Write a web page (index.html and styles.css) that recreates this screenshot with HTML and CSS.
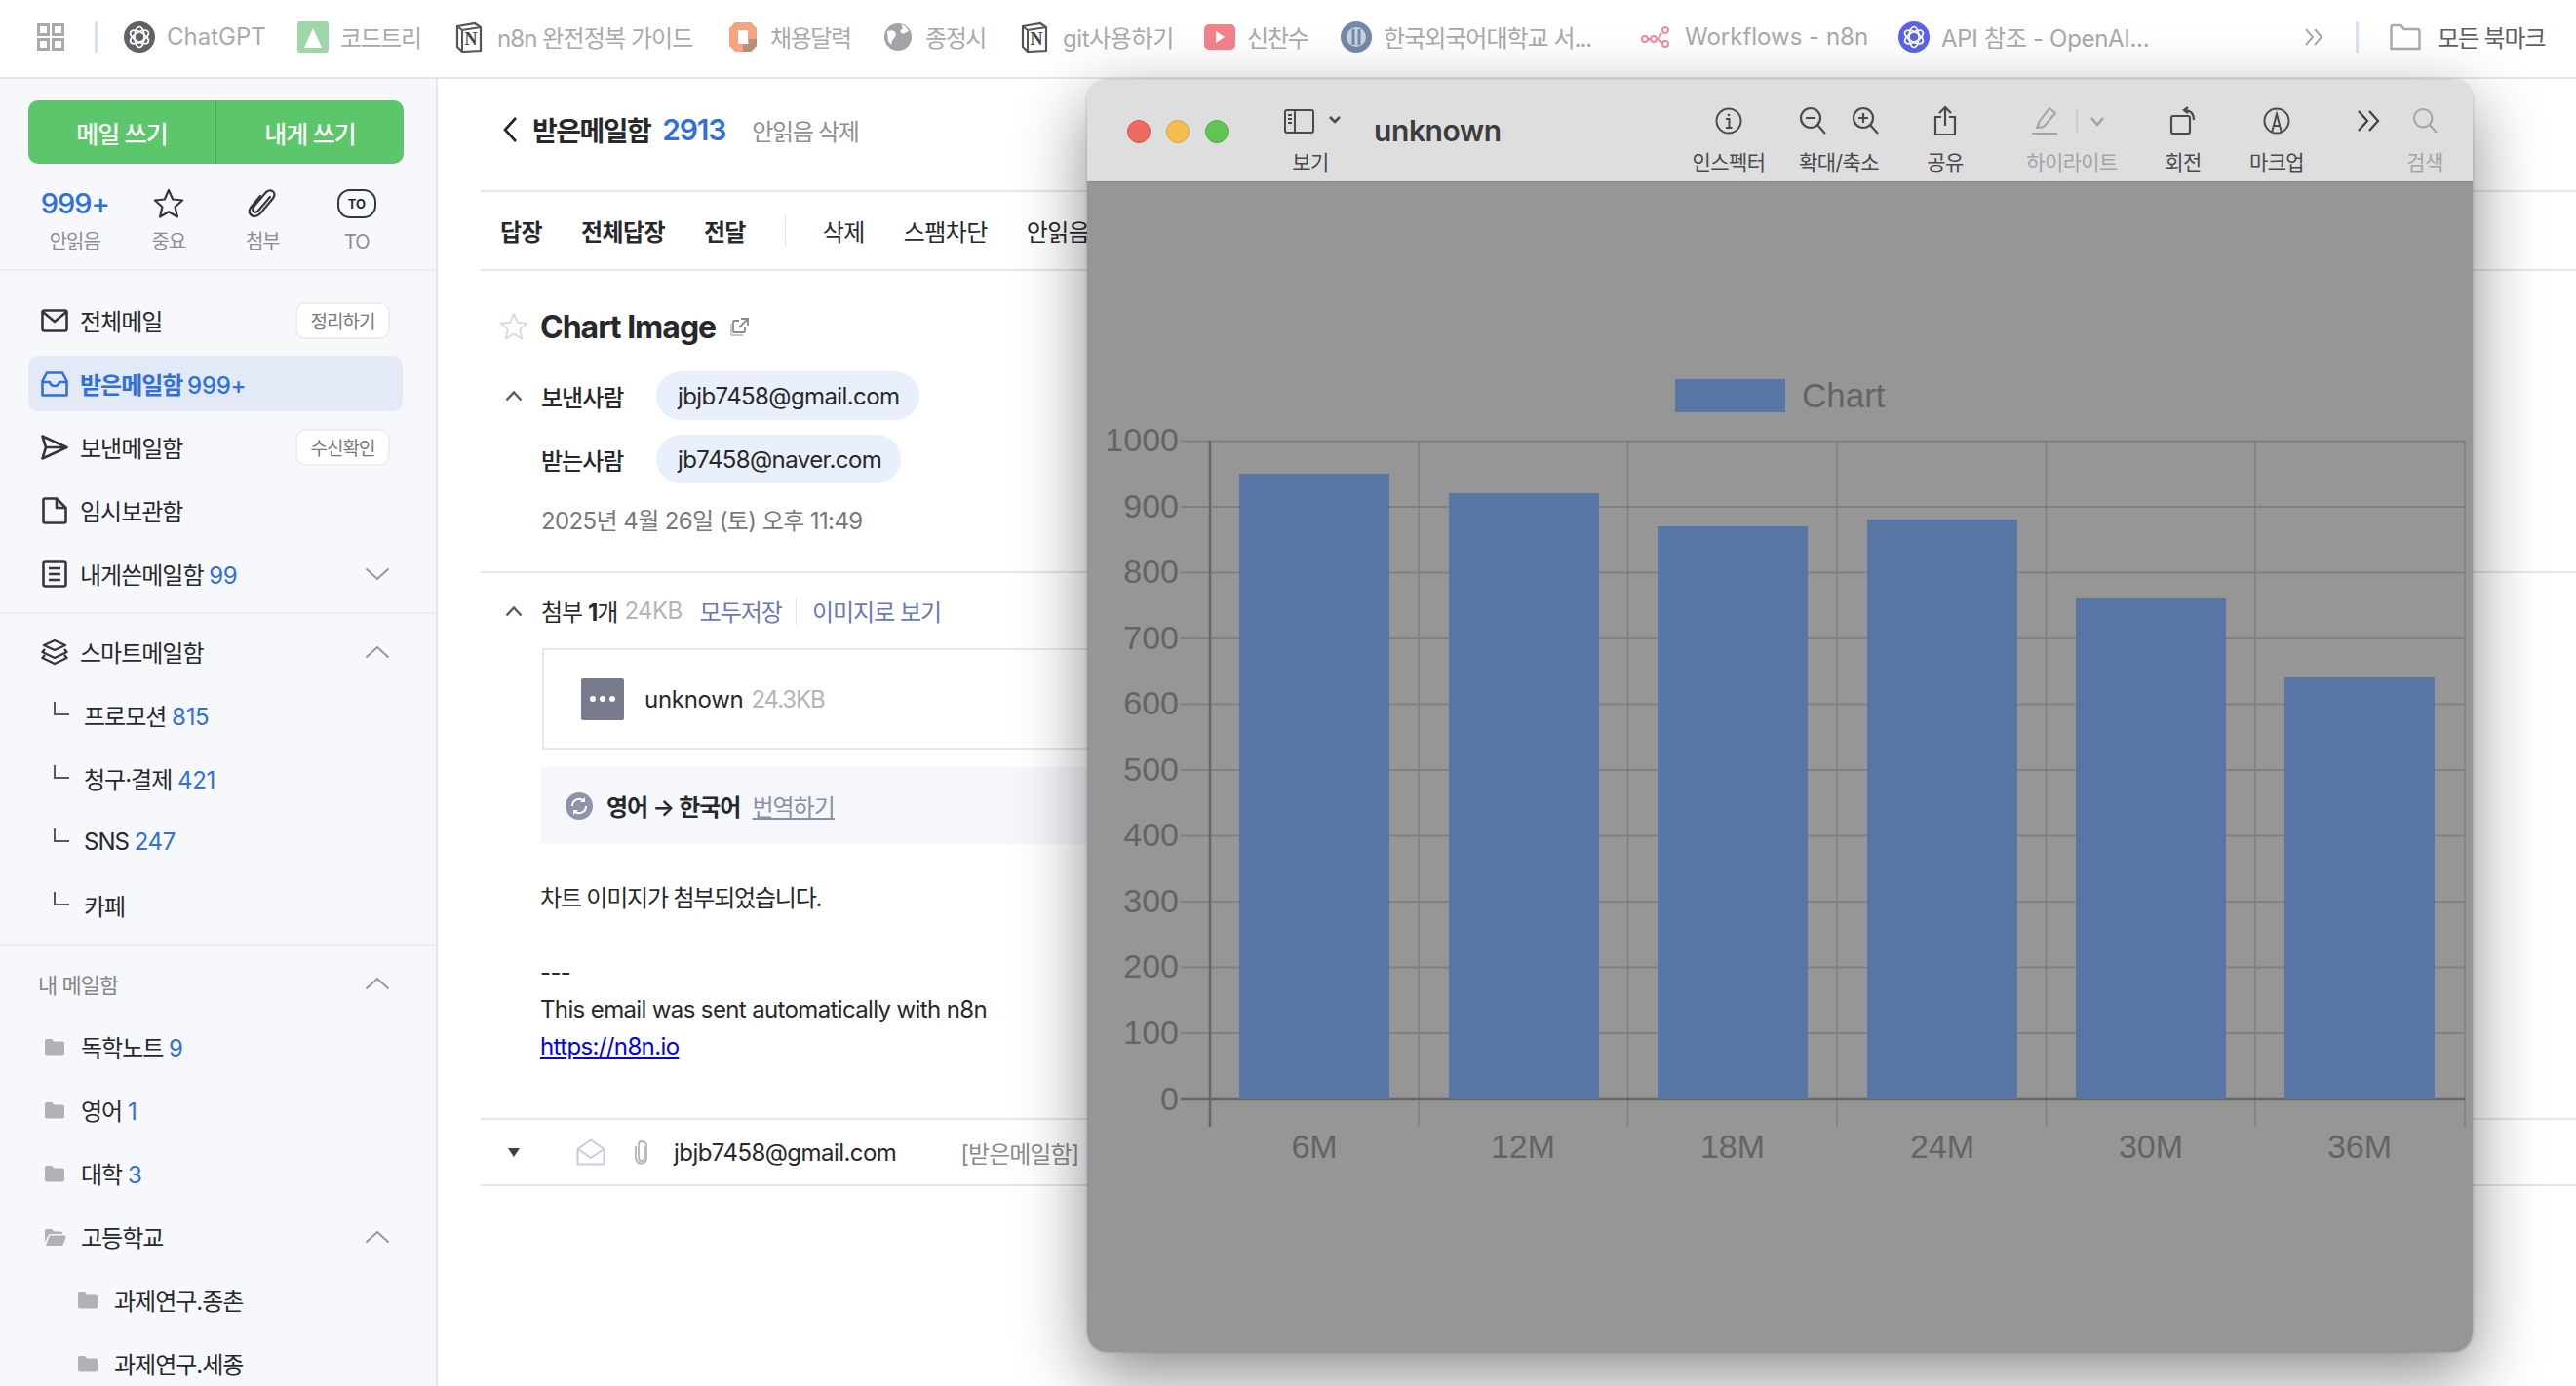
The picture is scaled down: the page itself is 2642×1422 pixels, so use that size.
FILE: index.html
```html
<!DOCTYPE html>
<html lang="ko">

<head>
    <title>받은메일함 - Chart Image</title>
    <meta charset="utf-8">
    <link rel="stylesheet" href="styles.css">
</head>

<body>
    <svg class="defs" width="0" height="0">
        <symbol id="folder" viewBox="0 0 20 18"><path d="M0 3q0-2 2-2h5l2 2.500h9q2 0 2 2v10q0 2-2 2H2q-2 0-2-2z" fill="#b1b1b6"/></symbol>
        <symbol id="chev-up" viewBox="0 0 26 14"><path d="M1.500 12.500 13 2l11.500 10.500" fill="none" stroke="#96969a" stroke-width="2"/></symbol>
        <symbol id="chev-down" viewBox="0 0 26 14"><path d="M1.500 1.500 13 12 24.500 1.500" fill="none" stroke="#96969a" stroke-width="2"/></symbol>
        <symbol id="small-up" viewBox="0 0 18 12"><path d="M1.500 10.500 9 2.500l7.500 8" fill="none" stroke="#55585e" stroke-width="2.400"/></symbol>
        <symbol id="elbow" viewBox="0 0 18 16"><path d="M2 1v13h15" fill="none" stroke="#55585e" stroke-width="2"/></symbol>
        <symbol id="knot" viewBox="0 0 32 32"><g fill="none" stroke="#fff" stroke-width="1.700"><ellipse cx="16" cy="16" rx="5" ry="10.500"/><ellipse cx="16" cy="16" rx="5" ry="10.500" transform="rotate(60 16 16)"/><ellipse cx="16" cy="16" rx="5" ry="10.500" transform="rotate(120 16 16)"/></g></symbol>
        <symbol id="notion" viewBox="0 0 28 32"><path d="M2 5 20 2l6 4v24L7 31l-5-5z" fill="#fff" stroke="#555" stroke-width="2.200"/><path d="M2 5l5 4 19-3M7 9v22" fill="none" stroke="#555" stroke-width="2"/></symbol>
    </svg>

    <header class="bookmarks">
        <svg class="bm-grid" width="28" height="28" viewBox="0 0 28 28" fill="none" stroke="#a9a9ad" stroke-width="3"><rect x="1.500" y="1.500" width="10" height="10"/><rect x="16.500" y="1.500" width="10" height="10"/><rect x="1.500" y="16.500" width="10" height="10"/><rect x="16.500" y="16.500" width="10" height="10"/></svg>
        <span class="bm-sep bm-sep-first"></span>
        <a class="bm bm-gpt"><svg width="32" height="32" viewBox="0 0 32 32"><circle cx="16" cy="16" r="16" fill="#626266"/><use href="#knot" width="32" height="32"/></svg>ChatGPT</a>
        <a class="bm bm-code"><svg width="32" height="32" viewBox="0 0 32 32"><rect width="32" height="32" rx="3" fill="#9fd6a8"/><path d="M16 7 25 27H7z" fill="#fff"/></svg>코드트리</a>
        <a class="bm bm-guide"><span class="notion"><svg width="28" height="32"><use href="#notion"/></svg><i>N</i></span>n8n 완전정복 가이드</a>
        <a class="bm bm-cal"><svg width="28" height="32" viewBox="0 0 28 32"><path d="M6 1h16l6 6v18l-6 6H6l-6-6V7z" fill="#f2a57f"/><path d="M28 18v7l-6 6H14V23h6v-5z" fill="#b98f78"/><rect x="9" y="9" width="10" height="14" fill="#fff"/></svg>채용달력</a>
        <a class="bm bm-jong"><svg width="28" height="32" viewBox="0 0 28 32"><circle cx="14" cy="16" r="14" fill="#a2a4a8"/><path d="M3 10q6-2 8 1t-1 6-3 7l-3-4zM17 3q6 2 8 7l-6 3-3-3 3-3z" fill="#fff"/></svg>종정시</a>
        <a class="bm bm-git"><span class="notion"><svg width="28" height="32"><use href="#notion"/></svg><i>N</i></span>git사용하기</a>
        <a class="bm bm-shin"><svg width="32" height="32" viewBox="0 0 32 32"><rect y="3" width="32" height="26" rx="5" fill="#f4828b"/><path d="M12 10l9 6-9 6z" fill="#fff"/></svg>신찬수</a>
        <a class="bm bm-hufs"><svg width="32" height="32" viewBox="0 0 32 32"><circle cx="16" cy="16" r="16" fill="#7389a8"/><circle cx="16" cy="16" r="10" fill="#c9d2de"/><path d="M13 8v16M19 8v16" stroke="#7389a8" stroke-width="3"/></svg><span>한국외국어대학교 서...</span></a>
        <a class="bm bm-flow"><svg width="30" height="22" viewBox="0 0 30 22" fill="none" stroke="#ee8d9f" stroke-width="2"><circle cx="4" cy="13" r="3"/><circle cx="13" cy="13" r="3"/><circle cx="25" cy="4" r="3"/><circle cx="25" cy="18" r="3"/><path d="M7 13h3M16 13q3 0 5-6M16 13q3 0 6 4"/></svg>Workflows - n8n</a>
        <a class="bm bm-api"><svg width="32" height="32" viewBox="0 0 32 32"><circle cx="16" cy="16" r="16" fill="#5a62ea"/><use href="#knot" width="32" height="32"/></svg>API 참조 - OpenAI...</a>
        <svg class="bm-more" width="20" height="20" viewBox="0 0 20 20" fill="none" stroke="#a9a9ad" stroke-width="2"><path d="M2 2l7 8-7 8M11 2l7 8-7 8"/></svg>
        <span class="bm-sep"></span>
        <a class="bm bm-all"><svg width="32" height="28" viewBox="0 0 32 28" fill="none" stroke="#aaaaae" stroke-width="2.400"><path d="M1.500 26V4q0-2 2-2h8l3 4h14q2 0 2 2v18z"/></svg>모든 북마크</a>
    </header>

    <div class="app">
        <aside class="sidebar">
            <section class="side-top">
                <div class="compose"><span>메일 쓰기</span><span>내게 쓰기</span></div>
                <div class="stats">
                    <div class="stat stat-num"><b>999+</b><small>안읽음</small></div>
                    <div class="stat"><svg width="32" height="32" viewBox="0 0 32 32" fill="none" stroke="#33363c" stroke-width="2.200" stroke-linejoin="round"><path d="M16 2l4.200 9.500 10 1-7.600 6.800 2.300 10.200L16 24.200 7.100 29.500l2.300-10.200L1.800 12.500l10-1z"/></svg><small>중요</small></div>
                    <div class="stat"><svg width="32" height="32" viewBox="0 0 32 32" fill="none" stroke="#33363c" stroke-width="2.200" stroke-linecap="round"><path d="M24 9 12 23q-3 3-5 1t1-6L20 4q4-3 7-.5t0 7L14 26q-5 5-9 2t-1-8L14 8"/></svg><small>첨부</small></div>
                    <div class="stat"><span class="to-icon">TO</span><small>TO</small></div>
                </div>
            </section>

            <section class="side-sec side-main">
                <div class="row"><svg class="ic" width="28" height="24" viewBox="0 0 28 24" fill="none" stroke="#33363c" stroke-width="2.600" stroke-linejoin="round"><rect x="1.500" y="1.500" width="25" height="21" rx="2"/><path d="M2 3l12 10L26 3"/></svg><span class="lbl">전체메일</span><span class="tag">정리하기</span></div>
                <div class="row row-on"><svg class="ic" width="28" height="26" viewBox="0 0 28 26" fill="none" stroke="#2f6fe0" stroke-width="2.600" stroke-linejoin="round"><path d="M1.500 10 6 1.500h16L26.500 10v14.500h-25z"/><path d="M2 11h7q1 4 5 4t5-4h7"/></svg><span class="lbl">받은메일함 <em>999+</em></span></div>
                <div class="row"><svg class="ic" width="28" height="26" viewBox="0 0 28 26" fill="none" stroke="#33363c" stroke-width="2.600" stroke-linejoin="round"><path d="M1.500 1.500 26.500 13 1.500 24.500 5 13zM5 13h21"/></svg><span class="lbl">보낸메일함</span><span class="tag">수신확인</span></div>
                <div class="row"><svg class="ic" width="28" height="28" viewBox="0 0 28 28" fill="none" stroke="#33363c" stroke-width="2.600" stroke-linejoin="round"><path d="M2.500 3q0-1.500 1.500-1.500h12l9.500 9.500v14q0 1.500-1.500 1.500H4q-1.500 0-1.500-1.500z"/><path d="M16 2v9h9"/></svg><span class="lbl">임시보관함</span></div>
                <div class="row"><svg class="ic" width="28" height="28" viewBox="0 0 28 28" fill="none" stroke="#33363c" stroke-width="2.600" stroke-linejoin="round"><rect x="2.500" y="1.500" width="23" height="25" rx="2"/><path d="M8 8h12M8 14h12M8 20h12"/></svg><span class="lbl">내게쓴메일함 <em>99</em></span><svg class="chev" width="26" height="14"><use href="#chev-down"/></svg></div>
            </section>

            <section class="side-sec side-smart">
                <div class="row"><svg class="ic" width="28" height="28" viewBox="0 0 28 28" fill="none" stroke="#33363c" stroke-width="2.400" stroke-linejoin="round"><path d="M14 2l11 5-11 5L3 7zM4 11 1.500 14 14 20l12.500-6L24 11M4 17l-2.500 3L14 26l12.500-6L24 17"/></svg><span class="lbl">스마트메일함</span><svg class="chev" width="26" height="14"><use href="#chev-up"/></svg></div>
                <div class="row row-sub"><svg class="elbow" width="18" height="16"><use href="#elbow"/></svg><span class="lbl">프로모션 <em>815</em></span></div>
                <div class="row row-sub"><svg class="elbow" width="18" height="16"><use href="#elbow"/></svg><span class="lbl">청구·결제 <em>421</em></span></div>
                <div class="row row-sub"><svg class="elbow" width="18" height="16"><use href="#elbow"/></svg><span class="lbl">SNS <em>247</em></span></div>
                <div class="row row-sub"><svg class="elbow" width="18" height="16"><use href="#elbow"/></svg><span class="lbl">카페</span></div>
            </section>

            <section class="side-sec side-mine">
                <div class="row row-head"><span class="lbl">내 메일함</span><svg class="chev" width="26" height="14"><use href="#chev-up"/></svg></div>
                <div class="row row-f"><svg class="fold" width="20" height="18"><use href="#folder"/></svg><span class="lbl">독학노트 <em>9</em></span></div>
                <div class="row row-f"><svg class="fold" width="20" height="18"><use href="#folder"/></svg><span class="lbl">영어 <em>1</em></span></div>
                <div class="row row-f"><svg class="fold" width="20" height="18"><use href="#folder"/></svg><span class="lbl">대학 <em>3</em></span></div>
                <div class="row row-f"><svg class="fold fold-open" width="22" height="18" viewBox="0 0 22 18"><path d="M0 3q0-2 2-2h5l2 2.500h7q2 0 2 2V6H6q-2 0-3 2L0 15z" fill="#b1b1b6"/><path d="M5 7.500h15q2 0 1.500 2L19 16q-.5 2-2 2H1z" fill="#b1b1b6"/></svg><span class="lbl">고등학교</span><svg class="chev" width="26" height="14"><use href="#chev-up"/></svg></div>
                <div class="row row-f row-nest"><svg class="fold" width="20" height="18"><use href="#folder"/></svg><span class="lbl">과제연구.종촌</span></div>
                <div class="row row-f row-nest"><svg class="fold" width="20" height="18"><use href="#folder"/></svg><span class="lbl">과제연구.세종</span></div>
            </section>
        </aside>

        <main class="mail">
            <div class="mail-head">
                <svg class="back" width="16" height="28" viewBox="0 0 16 28" fill="none" stroke="#222" stroke-width="2.600"><path d="M14 2 3 14l11 12"/></svg>
                <h1>받은메일함</h1>
                <span class="head-count">2913</span>
                <span class="head-del">안읽음 삭제</span>
            </div>

            <div class="mail-tools">
                <b>답장</b><b>전체답장</b><b>전달</b>
                <i></i>
                <span>삭제</span><span>스팸차단</span><span>안읽음</span>
            </div>

            <div class="mail-meta">
                <div class="subject">
                    <svg width="30" height="30" viewBox="0 0 32 32" fill="none" stroke="#d6dbea" stroke-width="2" stroke-linejoin="round"><path d="M16 2l4.200 9.500 10 1-7.600 6.800 2.300 10.200L16 24.200 7.100 29.500l2.300-10.200L1.800 12.500l10-1z"/></svg>
                    <h2>Chart Image</h2>
                    <svg class="ext" width="20" height="20" viewBox="0 0 20 20" fill="none" stroke="#8a8a8e" stroke-width="1.800"><path d="M9 4H4q-1 0-1 1v10q0 1 1 1h10q1 0 1-1v-4M11 2h7v7M18 2 9 11"/><path d="M1 7v11q0 1 1 1h11" stroke="#c4c4c8"/></svg>
                </div>
                <div class="addr"><svg class="addr-ic" width="18" height="12"><use href="#small-up"/></svg><b>보낸사람</b><span class="pill">jbjb7458@gmail.com</span></div>
                <div class="addr addr-to"><b>받는사람</b><span class="pill">jb7458@naver.com</span></div>
                <p class="date">2025년 4월 26일 (토) 오후 11:49</p>
            </div>

            <div class="attach">
                <div class="attach-head">
                    <svg class="addr-ic" width="18" height="12"><use href="#small-up"/></svg>
                    <span class="att-count">첨부 <b>1</b>개</span><span class="att-size">24KB</span>
                    <a class="att-link">모두저장</a><i></i><a class="att-link">이미지로 보기</a>
                </div>
                <div class="att-box">
                    <span class="att-file"><u></u><u></u><u></u></span>
                    <span class="att-name">unknown</span><span class="att-kb">24.3KB</span>
                </div>
                <div class="translate">
                    <svg width="28" height="28" viewBox="0 0 28 28"><circle cx="14" cy="14" r="14" fill="#9094a8"/><path d="M7 14a7 7 0 0 1 12-5M21 14a7 7 0 0 1-12 5" fill="none" stroke="#fff" stroke-width="2"/><path d="M20 5v5h-5zM8 23v-5h5z" fill="#fff"/></svg>
                    <b>영어 → 한국어</b><a>번역하기</a>
                </div>
                <div class="body-text">
                    <p>차트 이미지가 첨부되었습니다.</p>
                    <p class="sig">---<br>This email was sent automatically with n8n<br><a href="#">https://n8n.io</a></p>
                </div>
            </div>

            <div class="mail-row">
                <span class="tri"></span>
                <svg class="env" width="30" height="28" viewBox="0 0 30 28" fill="none" stroke="#c5cce2" stroke-width="2" stroke-linejoin="round"><path d="M1.500 11 15 1.500 28.500 11v15.500h-27z"/><path d="M2 11l13 9 13-9"/></svg>
                <svg class="clip" width="14" height="26" viewBox="0 0 14 26" fill="none" stroke="#b4b4b8" stroke-width="1.800"><path d="M10 7v12q0 3-3 3t-3-3V5q0-3 3-3t5 3v14q0 5-5 5.500T1 19V7"/></svg>
                <span class="row-from">jbjb7458@gmail.com</span>
                <span class="row-box">[받은메일함]</span>
            </div>
        </main>
    </div>

    <!-- 미리보기 창 -->
    <div class="win">
        <div class="win-bar">
            <div class="lights"><i class="l-red"></i><i class="l-yel"></i><i class="l-grn"></i></div>
            <div class="tool tool-view">
                <svg width="62" height="36" viewBox="0 0 62 36" fill="none" stroke="#4a4a4c" stroke-width="2"><rect x="5" y="7" width="29" height="23" rx="2"/><path d="M15 7v23M8 12h4M8 16h4M8 20h4"/><path d="M51 14l5 5 5-5" stroke-width="2.600"/></svg>
                <span>보기</span>
            </div>
            <div class="win-title">unknown</div>
            <div class="tool tool-info">
                <svg width="28" height="28" viewBox="0 0 28 28" fill="none" stroke="#4a4a4c" stroke-width="2"><circle cx="14" cy="14" r="12.500"/><circle cx="14" cy="8" r="1.300" fill="#4a4a4c" stroke="none"/><path d="M11 12h3.500v9M11 21h6.500"/></svg>
                <span>인스펙터</span>
            </div>
            <div class="tool tool-zoom">
                <svg width="82" height="30" viewBox="0 0 82 30" fill="none" stroke="#4a4a4c" stroke-width="2.200"><circle cx="12" cy="12" r="10"/><path d="M7 12h10M19 19l8 9"/><circle cx="66" cy="12" r="10"/><path d="M61 12h10M66 7v10M73 19l8 9"/></svg>
                <span>확대/축소</span>
            </div>
            <div class="tool tool-share">
                <svg width="24" height="32" viewBox="0 0 24 32" fill="none" stroke="#4a4a4c" stroke-width="2.200"><path d="M8 12H2v18h20V12h-6M12 21V2M6 8l6-6 6 6"/></svg>
                <span>공유</span>
            </div>
            <div class="tool tool-high tool-dim">
                <svg width="84" height="30" viewBox="0 0 84 30" fill="none" stroke="#a4a4a8" stroke-width="2"><path d="M6 22 9 15 19 2l6 5-12 14zM1 28h26"/><path d="M47 2v26" stroke="#cacacc"/><path d="M62 12l6 7 6-7" stroke-width="2.600"/></svg>
                <span>하이라이트</span>
            </div>
            <div class="tool tool-rot">
                <svg width="28" height="30" viewBox="0 0 28 30" fill="none" stroke="#4a4a4c" stroke-width="2.200"><rect x="2" y="10" width="19" height="18" rx="2"/><path d="M15 4q10 0 10 10M19 1l-4 3 4 3"/></svg>
                <span>회전</span>
            </div>
            <div class="tool tool-mark">
                <svg width="28" height="28" viewBox="0 0 28 28" fill="none" stroke="#4a4a4c" stroke-width="2"><circle cx="14" cy="14" r="12.500"/><path d="M9 26 14 7l5 19M11 19h6" stroke-width="2"/></svg>
                <span>마크업</span>
            </div>
            <div class="tool tool-more">
                <svg width="26" height="24" viewBox="0 0 26 24" fill="none" stroke="#3e3e40" stroke-width="2.200"><path d="M2 2l9 10-9 10M13 2l9 10-9 10"/></svg>
            </div>
            <div class="tool tool-find tool-dim">
                <svg width="26" height="28" viewBox="0 0 28 30" fill="none" stroke="#a4a4a8" stroke-width="2.200"><circle cx="12" cy="12" r="10"/><path d="M19 19l8 9"/></svg>
                <span>검색</span>
            </div>
        </div>
        <div class="win-body">
            <svg class="chart" width="1421" height="1200" viewBox="1115 187 1421 1200">
                <rect class="bar" x="1718" y="389" width="113" height="34"/>
                <text class="ax ax-legend" x="1848" y="418">Chart</text>
                <g class="grid">
                    <path d="M1211 452.500H2528M1211 520H2528M1211 587.500H2528M1211 655H2528M1211 722.500H2528M1211 790H2528M1211 857.500H2528M1211 925H2528M1211 992.500H2528M1211 1060H2528"/>
                    <path d="M1455 452V1156M1669.500 452V1156M1884 452V1156M2098.500 452V1156M2313 452V1156M2528 452V1156"/>
                </g>
                <path class="axis" d="M1241 452V1156M1211 1128H2528"/>
                <rect class="bar" x="1271" y="486" width="154" height="642"/>
                <rect class="bar" x="1486" y="506" width="154" height="622"/>
                <rect class="bar" x="1700" y="540" width="154" height="588"/>
                <rect class="bar" x="1915" y="533" width="154" height="595"/>
                <rect class="bar" x="2129" y="614" width="154" height="514"/>
                <rect class="bar" x="2343" y="695" width="154" height="433"/>
                <g class="ax ax-y">
                    <text x="1209" y="463">1000</text><text x="1209" y="531">900</text><text x="1209" y="598">800</text><text x="1209" y="666">700</text><text x="1209" y="733">600</text><text x="1209" y="801">500</text><text x="1209" y="868">400</text><text x="1209" y="936">300</text><text x="1209" y="1003">200</text><text x="1209" y="1071">100</text><text x="1209" y="1139">0</text>
                </g>
                <g class="ax ax-x">
                    <text x="1348" y="1188">6M</text><text x="1562" y="1188">12M</text><text x="1777" y="1188">18M</text><text x="1992" y="1188">24M</text><text x="2206" y="1188">30M</text><text x="2420" y="1188">36M</text>
                </g>
            </svg>
        </div>
    </div>
</body>

</html>
```
FILE: styles.css
```css
* {
    box-sizing: border-box;
}

html,
body {
    margin: 0;
    height: 1422px;
    overflow: hidden;
    background-color: #fff;
}

body {
    font-family: Inter, "Noto Sans CJK KR", sans-serif;
    font-size: 24px;
    letter-spacing: -1px;
    color: #26282c;
    position: relative;
}

.defs {
    position: absolute;
}

h1,
h2,
p {
    margin: 0;
}

svg {
    flex: none;
    display: block;
}

/* 북마크 바 */
.bookmarks {
    height: 81px;
    display: flex;
    align-items: center;
    padding: 0 0 4px 38px;
    border-bottom: 2px solid #e6e6e8;
    color: #a9a9ac;
}

.bm {
    display: flex;
    align-items: center;
    gap: 12px;
    white-space: nowrap;
    flex: none;
}

.bm-sep {
    width: 3px;
    height: 32px;
    background-color: #d5e2f9;
    margin-left: 33px;
}

.bm-sep-first {
    margin: 0 27px 0 31px;
}

.bm-gpt { width: 178px; letter-spacing: 0; }
.bm-code { width: 162px; letter-spacing: -1.400px; }
.bm-guide { width: 281px; gap: 15px; letter-spacing: -.9px; }
.bm-cal { width: 159px; gap: 14px; letter-spacing: -1.400px; }
.bm-jong { width: 140px; gap: 14px; letter-spacing: -1.400px; }
.bm-git { width: 188px; gap: 15px; letter-spacing: -.4px; }
.bm-shin { width: 140px; letter-spacing: -1.200px; }
.bm-hufs { width: 308px; letter-spacing: -1px; }
.bm-flow { width: 264px; gap: 15px; letter-spacing: 0; }
.bm-api { width: 416px; letter-spacing: -.3px; }
.bm-all { margin-left: 32px; color: #5c5f66; gap: 17px; letter-spacing: -1.100px; }

.notion {
    position: relative;
    display: block;
    flex: none;
}

.notion i {
    position: absolute;
    left: 8px;
    top: 9px;
    width: 16px;
    text-align: center;
    font: 700 18px/18px "Liberation Serif", serif;
    letter-spacing: 0;
    color: #444;
}

.app {
    display: flex;
    height: 1341px;
}

/* 사이드바 */
.sidebar {
    width: 449px;
    flex: none;
    height: 100%;
    background-color: #f6f8fc;
    border-right: 2px solid #e6e8ec;
    overflow: hidden;
}

.side-top {
    height: 197px;
    padding: 22px 33px 0 29px;
    border-bottom: 2px solid #eceef2;
}

.compose {
    display: flex;
    height: 65px;
    background-color: #5cc66a;
    border-radius: 10px;
    color: #fff;
    font-weight: 500;
    font-size: 25px;
}

.compose span {
    flex: 1;
    display: flex;
    align-items: center;
    justify-content: center;
}

.compose span:first-child {
    border-right: 1px solid #48a856;
}

.stats {
    display: flex;
    margin-top: 25px;
    margin-left: 12px;
}

.stat {
    width: 97px;
    display: flex;
    flex-direction: column;
    align-items: center;
    height: 67px;
    justify-content: space-between;
}

.stat small {
    font-size: 20px;
    color: #8d8d92;
    letter-spacing: -1px;
    line-height: 24px;
}

.stat-num {
    width: 72px;
    margin-right: 12px;
}

.stat-num b {
    font-size: 29px;
    font-weight: 500;
    color: #2f6fe0;
    line-height: 32px;
}

.to-icon {
    width: 40px;
    height: 30px;
    border: 2.500px solid #33363c;
    border-radius: 13px;
    font-size: 13px;
    font-weight: 700;
    letter-spacing: 0;
    display: flex;
    align-items: center;
    justify-content: center;
    margin-top: 1px;
}

.side-sec {
    display: flex;
    flex-direction: column;
    gap: 8px;
    border-bottom: 2px solid #eceef2;
}

.side-main {
    padding-top: 22px;
    padding-bottom: 11px;
}

.side-smart {
    padding-top: 10px;
    padding-bottom: 12px;
}

.side-mine {
    padding-top: 9px;
    border-bottom: 0;
}

.row {
    height: 57px;
    flex: none;
    display: flex;
    align-items: center;
    margin-left: 29px;
    width: 384px;
    padding-left: 13px;
    padding-right: 13px;
    border-radius: 10px;
}

.ic {
    margin-right: 12px;
}

.lbl {
    flex: 1;
    white-space: nowrap;
}

.lbl em {
    font-style: normal;
    color: #2f6fe0;
    letter-spacing: -.3px;
}

.row-on {
    background-color: #e3e9f6;
    color: #2f6fe0;
    font-weight: 700;
}

.row-on em {
    font-weight: 500;
}

.tag {
    width: 97px;
    height: 38px;
    background-color: #fff;
    border: 2px solid #edeef2;
    border-radius: 10px;
    font-size: 19px;
    color: #77777c;
    display: flex;
    align-items: center;
    justify-content: center;
}

.row-sub {
    padding-left: 25px;
}

.elbow {
    margin-right: 14px;
    margin-top: -14px;
}

.row-head {
    padding-left: 10px;
}

.row-head .lbl {
    font-size: 22px;
    color: #85858a;
}

.row-f {
    padding-left: 17px;
}

.fold {
    margin-right: 17px;
}

.fold-open {
    margin-right: 15px;
}

.row-nest {
    padding-left: 51px;
}

.chev {
    margin-left: auto;
}

/* 메일 본문 */
.mail {
    flex: 1;
    padding-left: 44px;
    min-width: 0;
    overflow: hidden;
}

.mail-head {
    height: 116px;
    display: flex;
    align-items: center;
    padding: 0 0 10px 22px;
    border-bottom: 2px solid #e6e6ea;
}

.back {
    margin-right: 15px;
}

.mail-head h1 {
    font-size: 28px;
    font-weight: 700;
    letter-spacing: -1.500px;
}

.head-count {
    margin-left: 12px;
    font-size: 30px;
    font-weight: 600;
    color: #2f6fe0;
    letter-spacing: -1.200px;
}

.head-del {
    margin-left: 27px;
    color: #8f8f94;
    letter-spacing: -1.300px;
}

.mail-tools {
    height: 81px;
    display: flex;
    align-items: center;
    padding: 0 0 0 20px;
    border-bottom: 2px solid #e6e6ea;
    white-space: nowrap;
    letter-spacing: -.6px;
}

.mail-tools b {
    font-weight: 700;
    margin-right: 40px;
}

.mail-tools i {
    width: 1px;
    height: 32px;
    background-color: #e2e2e6;
    margin: 0 38px 0 0;
}

.mail-tools span {
    margin-right: 40px;
}

.mail-meta {
    height: 310px;
    border-bottom: 2px solid #e6e6ea;
    padding: 39px 0 0 19px;
}

.subject {
    display: flex;
    align-items: center;
    height: 36px;
}

.subject h2 {
    font-size: 32px;
    font-weight: 700;
    margin-left: 12px;
    letter-spacing: -1px;
}

.ext {
    margin-left: 15px;
}

.addr {
    display: flex;
    align-items: center;
    height: 50px;
    margin-top: 28px;
}

.addr-ic {
    margin-left: 6px;
}

.addr b {
    font-weight: 500;
    margin-left: 19px;
    width: 118px;
}

.addr-to {
    margin-top: 15px;
}

.addr-to b {
    margin-left: 43px;
}

.pill {
    padding: 0 21px 0 22px;
    height: 50px;
    display: flex;
    align-items: center;
    border-radius: 25px;
    background-color: #e9effb;
    letter-spacing: -.6px;
}

.addr-to .pill {
    padding-right: 20px;
}

.date {
    margin: 19px 0 0 43px;
    color: #77777c;
    letter-spacing: -.6px;
}

.attach-head {
    height: 77px;
    display: flex;
    align-items: center;
    padding-left: 19px;
}

.att-count {
    margin-left: 19px;
    white-space: nowrap;
}

.att-count b {
    font-weight: 700;
}

.att-size {
    margin-left: 7px;
    color: #b4b4b8;
    letter-spacing: -.6px;
}

.att-link {
    margin-left: 18px;
    color: #6a78b4;
}

.attach-head i {
    width: 1px;
    height: 28px;
    background-color: #e2e2e6;
    margin: 0 -2px 0 14px;
}

.att-box {
    margin: 0 200px 0 63px;
    height: 104px;
    border: 2px solid #e8e8ec;
    display: flex;
    align-items: center;
    padding-left: 38px;
}

.att-file {
    width: 44px;
    height: 43px;
    background-color: #777b8c;
    border-radius: 2px;
    display: flex;
    align-items: center;
    justify-content: center;
    gap: 4px;
    margin-right: 21px;
}

.att-file u {
    width: 6px;
    height: 6px;
    border-radius: 50%;
    background-color: #fff;
}

.att-name {
    letter-spacing: -.3px;
}

.att-kb {
    margin-left: 8px;
    color: #b4b4b8;
    letter-spacing: -1.100px;
}

.translate {
    margin: 18px 200px 0 61px;
    height: 79px;
    background-color: #f6f7fa;
    display: flex;
    align-items: center;
    padding-left: 26px;
    white-space: nowrap;
}

.translate b {
    font-weight: 600;
    margin-left: 14px;
}

.translate a {
    margin-left: 12px;
    color: #8a8fa8;
    text-decoration: underline;
}

.body-text {
    margin-left: 61px;
    padding-top: 37px;
    height: 281px;
    white-space: nowrap;
    letter-spacing: -1.200px;
}

.body-text p {
    line-height: 38px;
}

.body-text .sig {
    margin-top: 38px;
    letter-spacing: -.63px;
}

.body-text a {
    color: #0000ee;
}

.mail-row {
    height: 70px;
    border-top: 2px solid #e6e6ea;
    border-bottom: 2px solid #e6e6ea;
    display: flex;
    align-items: center;
    padding-left: 28px;
    white-space: nowrap;
}

.tri {
    width: 0;
    height: 0;
    border-left: 6.500px solid transparent;
    border-right: 6.500px solid transparent;
    border-top: 9px solid #3e4046;
}

.env {
    margin-left: 58px;
}

.clip {
    margin-left: 30px;
}

.row-from {
    margin-left: 26px;
    letter-spacing: -.55px;
}

.row-box {
    margin-left: 66px;
    color: #8b8b90;
}

/* 미리보기 창 */
.win {
    position: absolute;
    left: 1115px;
    top: 82px;
    width: 1421px;
    height: 1305px;
    border-radius: 20px;
    overflow: hidden;
    box-shadow: 0 24px 70px rgba(0, 0, 0, .46), 0 0 3px rgba(0, 0, 0, .25);
}

.win-bar {
    height: 105px;
    display: flex;
    background-color: #dededf;
    border-bottom: 1px solid #8a8a8a;
}

.lights {
    display: flex;
    gap: 16px;
    height: 24px;
    margin: 41px 0 0 41px;
}

.lights i {
    width: 24px;
    height: 24px;
    border-radius: 50%;
}

.l-red { background-color: #ee6a5f; border: 1px solid #d0564c; }
.l-yel { background-color: #f5bf4f; border: 1px solid #d8a440; }
.l-grn { background-color: #61c554; border: 1px solid #4fa945; }

.tool {
    width: 80px;
    flex: none;
    height: 105px;
    display: grid;
    grid-template-rows: 36px auto;
    justify-items: center;
    align-items: center;
    align-content: start;
    padding-top: 24px;
    font-size: 21px;
    color: #4a4a4c;
    letter-spacing: -.6px;
}

.tool span {
    margin-top: 12px;
    line-height: 26px;
    white-space: nowrap;
}

.tool-dim {
    color: #a4a4a8;
}

.tool-view { margin-left: 44px; }
.tool-zoom { margin-left: 32px; }
.tool-share { margin-left: 30px; }
.tool-high { margin-left: 30px; width: 120px; }
.tool-rot { margin-left: 14px; }
.tool-mark { margin-left: 16px; }
.tool-more { margin-left: 25px; width: 60px; }
.tool-find { margin-left: -3px; width: 60px; }

.win-title {
    width: 324px;
    flex: none;
    margin-left: 25px;
    padding-top: 34px;
    font-size: 30px;
    font-weight: 600;
    letter-spacing: -.4px;
    color: #3c3c3e;
}

.win-body {
    height: 1200px;
    background-color: #969696;
}

.bar {
    fill: #5876a4;
}

.grid path {
    fill: none;
    stroke: #808080;
    stroke-width: 2;
}

.grid path + path {
    stroke-width: 1.500;
}

.axis {
    fill: none;
    stroke: #666;
    stroke-width: 2.500;
}

.ax {
    font-family: "Liberation Sans", sans-serif;
    font-size: 34px;
    letter-spacing: 0;
    fill: #646464;
}

.ax-legend {
    font-size: 35px;
}

.ax-y {
    text-anchor: end;
}

.ax-x {
    text-anchor: middle;
}
```
